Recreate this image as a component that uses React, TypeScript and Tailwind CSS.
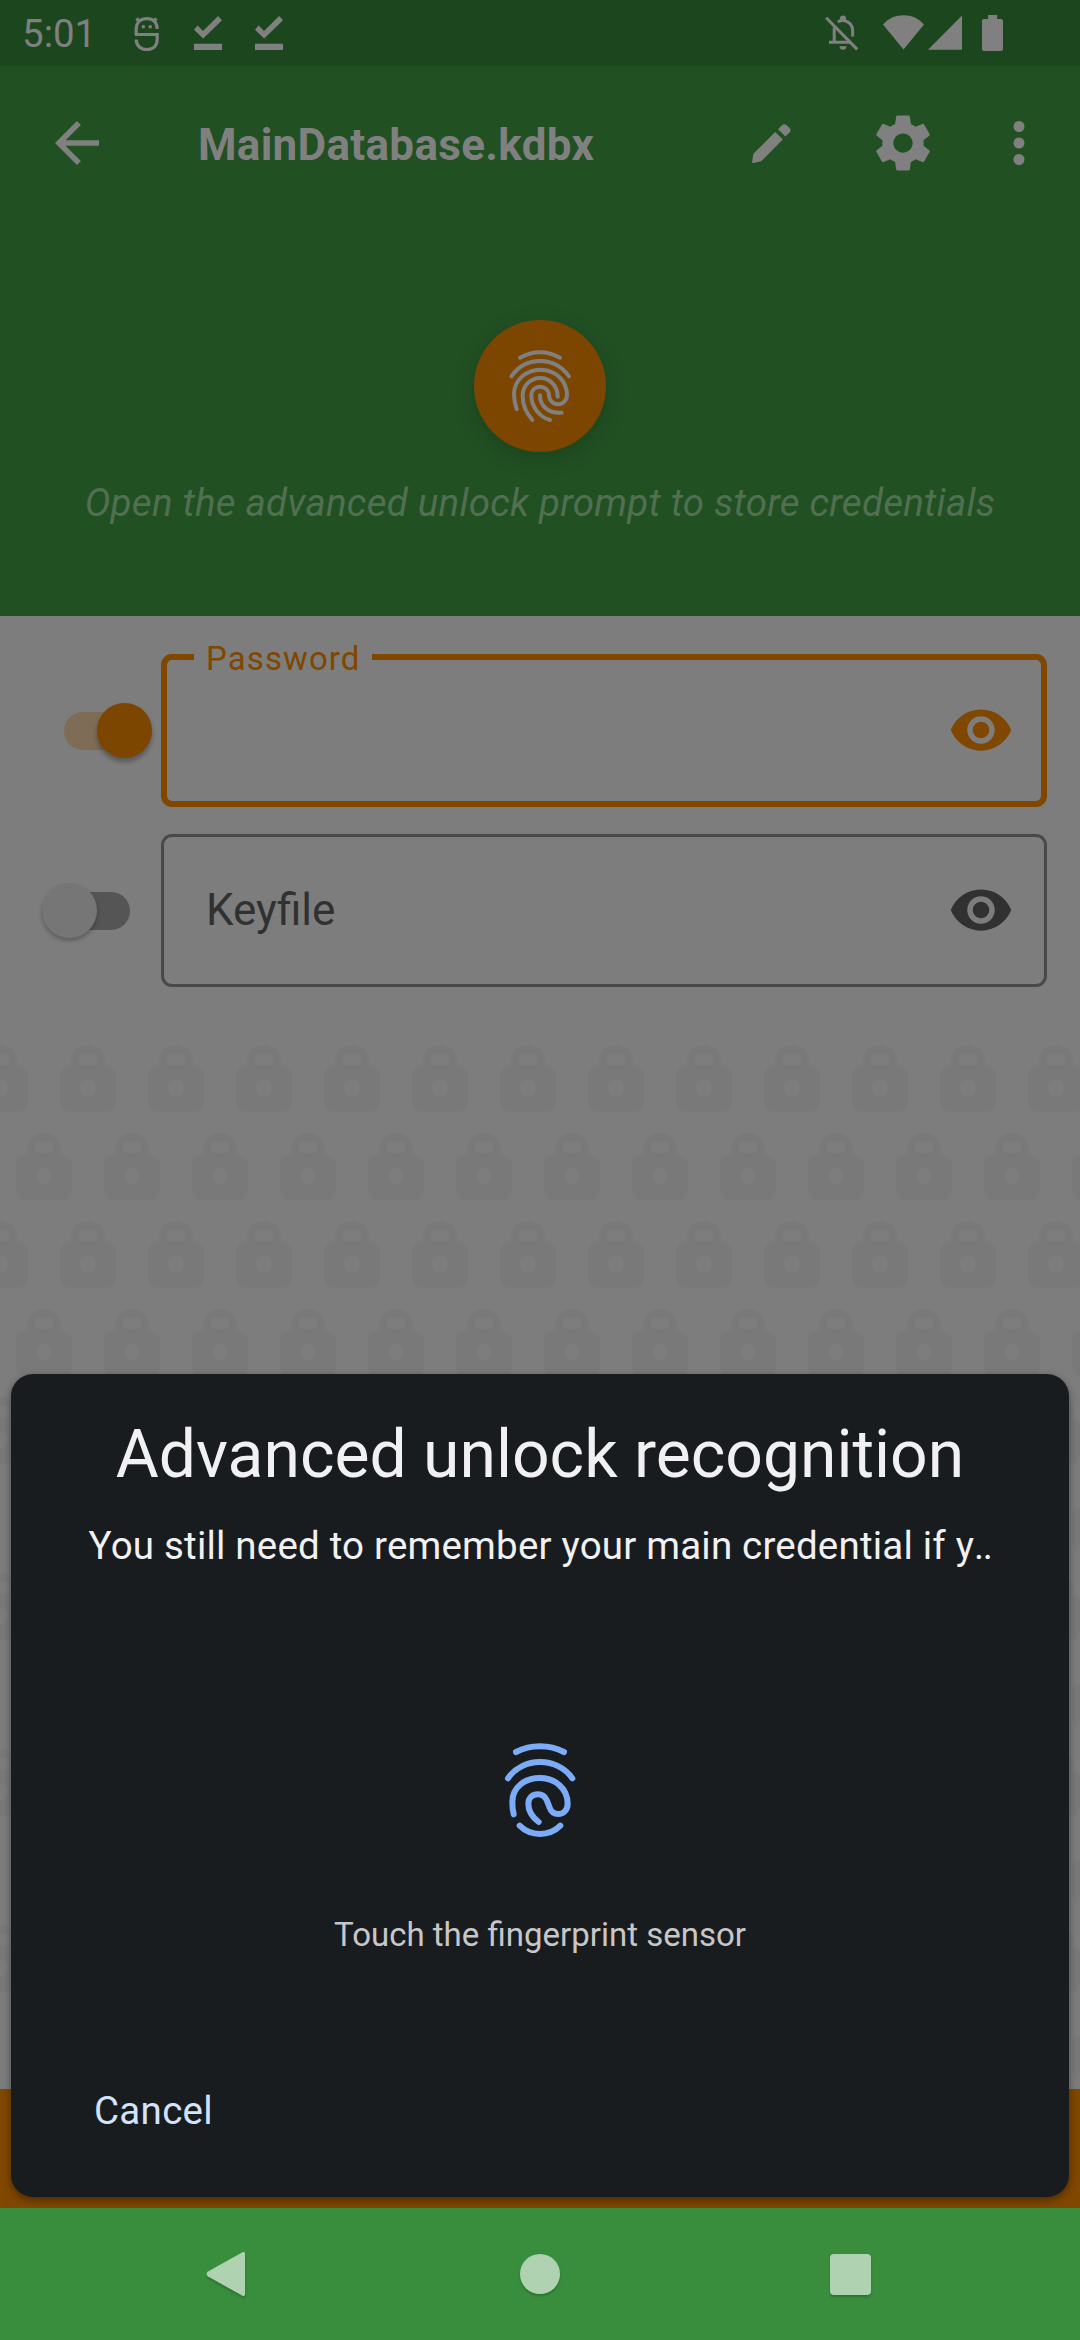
import React from "react";
import { MdVisibility, MdArrowBack } from "react-icons/md";

const FONT = "font-['Roboto',sans-serif]";

function DebugIcon() {
  return (
    <svg className="h-9 w-[26px]" viewBox="0 0 26 36" fill="none" stroke="#808080" strokeWidth="3.2">
      <path d="M2.2 18.5V13C2.2 6.5 6.7 2.7 13 2.7S23.2 6.5 23.2 13" />
      <path d="M0.8 18.5H23.2V23C23.2 30 19 33.5 13 33.5S2.2 30 2.2 23.5" />
      <path d="M2.5 2.5 6 6M22.5 2.5 19 6" />
      <circle cx="9.3" cy="10.8" r="1.8" fill="#808080" stroke="none" />
      <circle cx="16.2" cy="10.8" r="1.8" fill="#808080" stroke="none" />
    </svg>
  );
}

function DoneIcon() {
  return (
    <svg className="h-[34px] w-7" viewBox="0 0 28 34" fill="#808080">
      <path d="M0 13.7 3.6 9.6 9 15 24.1 0 28 4.2 9.2 22.6ZM0 27.8H28V34H0Z" />
    </svg>
  );
}

function BellOffIcon() {
  return (
    <svg className="h-9 w-[34px]" viewBox="0 0 34 36" fill="none" stroke="#808080" strokeWidth="3">
      <path d="M1.2 2.8 32.2 34.4" />
      <path d="M9.2 12.5V26.8M4 27.2H26" />
      <path d="M12.8 6.8C19 3.8 27.6 7 27.6 15.5V21.5" />
      <path d="M15 5V3.6A3 3 0 0 1 21 3.6V5Z" fill="#808080" stroke="none" />
      <path d="M14.6 31.3H21.4A3.4 3.4 0 0 1 14.6 31.3Z" fill="#808080" stroke="none" />
    </svg>
  );
}

function StatusBar() {
  return (
    <div className="flex h-[66px] items-start bg-[#1c471e] text-[#808080]">
      <span className="ml-[22px] mt-[11px] w-[112px] text-[38.5px] leading-[46px]">5:01</span>
      <div className="mt-4"><DebugIcon /></div>
      <div className="ml-[34px] mt-4"><DoneIcon /></div>
      <div className="ml-[33px] mt-4"><DoneIcon /></div>
      <div className="ml-auto mt-[15px] flex items-start">
        <div className="mr-6"><BellOffIcon /></div>
        <svg className="mr-1 h-[35px] w-[41px]" viewBox="0 0 41 35" fill="#808080">
          <path d="M20.5 34.5 0 9.5C10-3 31-3 41 9.5Z" />
        </svg>
        <svg className="mr-5 h-[35px] w-[34px]" viewBox="0 0 34 35" fill="#808080">
          <path d="M34 .5V34.8H0Z" />
        </svg>
        <svg className="mr-[77px] h-9 w-[21px]" viewBox="0 0 21 36" fill="#808080">
          <path d="M6.2 0H15.2V4H19A2 2 0 0 1 21 6V34A2 2 0 0 1 19 36H2A2 2 0 0 1 0 34V6A2 2 0 0 1 2 4H6.2Z" />
        </svg>
      </div>
    </div>
  );
}

function AppBar() {
  return (
    <div className="flex h-[154px] items-center text-[#808080]">
      <MdArrowBack className="ml-11 size-[66px]" />
      <h1 className="ml-[88px] mt-1 text-[44px] font-bold leading-[52px] tracking-[0.3px]">MainDatabase.kdbx</h1>
      <div className="ml-auto flex items-center">
        <svg className="mr-[79px] size-[39px]" viewBox="0 0 39 39" fill="currentColor">
          <path d="M23.2 8 30.8 15.4 10 36.6C9.5 37.1 9 37.4 8.3 37.5L1.2 38.9C.4 39 0 38.7.1 38L1.3 30.6C1.4 30 1.7 29.5 2.1 29.1ZM26 5.2 30 1.2C31.4-.2 33.3-.2 34.7 1.2L37.5 4C38.9 5.4 38.9 7 37.6 8.4L33.4 12.6Z" />
        </svg>
        <svg className="mr-[50px] size-[66px]" viewBox="0 0 24 24" fill="currentColor">
          <path d="M19.43 12.98c.04-.32.07-.64.07-.98s-.03-.66-.07-.98l2.11-1.65c.19-.15.24-.42.12-.64l-2-3.46c-.12-.22-.39-.3-.61-.22l-2.49 1c-.52-.4-1.08-.73-1.69-.98l-.38-2.65C14.46 2.18 14.25 2 14 2h-4c-.25 0-.46.18-.49.42l-.38 2.65c-.61.25-1.17.59-1.69.98l-2.49-1c-.23-.09-.49 0-.61.22l-2 3.46c-.13.22-.07.49.12.64l2.11 1.65c-.04.32-.07.65-.07.98s.03.66.07.98l-2.11 1.65c-.19.15-.24.42-.12.64l2 3.46c.12.22.39.3.61.22l2.49-1c.52.4 1.08.73 1.69.98l.38 2.65c.03.24.24.42.49.42h4c.25 0 .46-.18.49-.42l.38-2.65c.61-.25 1.17-.59 1.69-.98l2.49 1c.23.09.49 0 .61-.22l2-3.46c.12-.22.07-.49-.12-.64l-2.11-1.65zM12 15.5c-1.93 0-3.5-1.57-3.5-3.5s1.57-3.5 3.5-3.5 3.5 1.57 3.5 3.5-1.57 3.5-3.5 3.5z" />
        </svg>
        <svg className="mr-7 size-[66px]" viewBox="0 0 24 24" fill="currentColor">
          <circle cx="12" cy="6" r="2" />
          <circle cx="12" cy="12" r="2" />
          <circle cx="12" cy="18" r="2" />
        </svg>
      </div>
    </div>
  );
}

function UnlockButton() {
  return (
    <div className="flex size-[132px] items-center justify-center rounded-full bg-[#7d4600] shadow-[0_6px_22px_rgba(0,0,0,0.16)]">
      <svg className="size-[132px]" viewBox="102 60 396 396" fill="none" stroke="#808080" strokeWidth="12" strokeLinecap="round" strokeLinejoin="round">
        <path d="M240 173C278 151 322 151 360 173" />
        <path d="M214 229C258 168 342 168 387 229" />
        <path d="M230 327C224 310 222 300 222 283C222 242 257 209 301 209C346 209 381 242 381 286C381 301 369 313 354 313C339 313 327 301 327 286C327 271 315 260 300 260C286 260 274 271 274 286C274 320 298 352 330 360" />
        <path d="M277 360C258 338 248 315 248 287C248 258 271 234 301 234C330 234 353 258 353 290" />
        <path d="M300 286C300 318 325 341 365 338" />
      </svg>
    </div>
  );
}

function Switch({ on }: { on: boolean }) {
  return on ? (
    <div className="relative ml-16 h-[38px] w-[88px] rounded-full bg-[#7e6c56]">
      <div className="absolute -top-[9px] left-[33px] size-[55px] rounded-full bg-[#7d4600] shadow-[0_4px_5px_rgba(0,0,0,0.3)]" />
    </div>
  ) : (
    <div className="relative ml-[42px] h-[38px] w-[88px] rounded-full bg-[#555555]">
      <div className="absolute -top-[9px] left-0 size-[55px] rounded-full bg-[#767676] shadow-[0_3px_4px_rgba(0,0,0,0.25)]" />
    </div>
  );
}

function Credentials() {
  return (
    <div className="flex h-[428px] flex-col gap-[27px] pt-[38px]">
      <div className="flex h-[153px] items-center">
        <div className="w-[161px]"><Switch on /></div>
        <div className="relative flex h-[153px] w-[886px] items-center justify-end rounded-[11px] border-[6px] border-[#7f4700] pr-[27px]">
          <span className="absolute -top-[20px] left-[27px] h-[38px] w-[178px] bg-[#7d7d7d] pl-[12px] text-[33px] leading-[38px] tracking-[1.1px] text-[#7f4700]">Password</span>
          <MdVisibility className="mb-px size-[66px] text-[#7f4700]" />
        </div>
      </div>
      <div className="flex h-[153px] items-center">
        <div className="w-[161px]"><Switch on={false} /></div>
        <div className="flex h-[153px] w-[886px] items-center justify-between rounded-[11px] border-[3px] border-[#494949] pl-[42px] pr-[30px] text-[#313131]">
          <span className="mb-px text-[44px] leading-[52px]">Keyfile</span>
          <MdVisibility className="mb-px size-[66px]" />
        </div>
      </div>
    </div>
  );
}

const LOCK =
  "M-28 31A9 9 0 0 1 -19 22H-17V17A17 17 0 0 1 17 17V22H19A9 9 0 0 1 28 31V58A9 9 0 0 1 19 67H-19A9 9 0 0 1 -28 58ZM-8.5 20H8.5V12Q8.5 9 5.5 9H-5.5Q-8.5 9 -8.5 12ZM0 35A8 8 0 0 0 0 51A8 8 0 0 0 0 35Z";

function LockPattern() {
  return (
    <svg className="h-[1045px] w-[1080px]" fill="#797979" fillRule="evenodd">
      <defs>
        <pattern id="locks" y="0.7" width="88" height="176" patternUnits="userSpaceOnUse">
          <path d={LOCK} />
          <path d={LOCK} transform="translate(88 0)" />
          <path d={LOCK} transform="translate(44 88)" />
        </pattern>
      </defs>
      <rect width="1080" height="1045" fill="url(#locks)" />
    </svg>
  );
}

function BiometricDialog() {
  return (
    <div className={`absolute left-[11px] top-[1374px] flex h-[823px] w-[1058px] flex-col items-center rounded-[22px] bg-[#191c1e] shadow-[0_3px_8px_rgba(0,0,0,0.4)] ${FONT}`}>
      <h2 className="mt-[42px] text-[66px] leading-[78px] text-[#f1f1f3]">Advanced unlock recognition</h2>
      <p className="mt-[29px] text-[38.5px] leading-[46px] tracking-[0.2px] text-[#f1f1f3]">
        You still need to remember your main credential if y<span className="tracking-[-1.5px]">..</span>
      </p>
      <svg className="mt-[131px] size-[160px]" viewBox="0 0 480 480" fill="none" stroke="#7cacf8" strokeWidth="18" strokeLinecap="round">
        <path d="M168 156C212 133 268 133 312 156" />
        <path d="M144 235C188 170 292 170 337 235" />
        <path d="M161 343C157 328 157 320 157 305C157 262 194 234 240 234C288 234 323 268 323 311C323 330 310 342 295 342C282 342 273 334 269 323L260 300C254 288 246 283 234 283C218 283 205 293 205 312C205 335 218 352 236 366" />
        <path d="M179 377C212 410 268 410 301 377" />
      </svg>
      <p className="mt-[55px] text-[33px] leading-10 text-[#c7c7c9]">Touch the fingerprint sensor</p>
      <button className="ml-[83px] mt-[133px] self-start text-[38.5px] leading-[46px] tracking-[0.3px] text-[#d3e3fd]">Cancel</button>
    </div>
  );
}

function NavBar() {
  return (
    <div className="flex h-[132px] items-center bg-[#388e3c]">
      <svg className="h-[132px] w-[1080px] drop-shadow-[0_2px_1px_rgba(0,0,0,0.2)]" viewBox="0 0 1080 132" fill="#afd2b1">
        <path d="M242 44.5Q245 43 245 46V86Q245 89 242 87.5L208 68.5Q205 66 208 63.5Z" />
        <circle cx="540" cy="66" r="20" />
        <rect x="830" y="46" width="41" height="41" rx="4" />
      </svg>
    </div>
  );
}

export default function App() {
  return (
    <div className={`relative flex h-[2340px] w-[1080px] flex-col overflow-hidden bg-[#7d7d7d] ${FONT}`}>
      <StatusBar />
      <div className="flex h-[550px] flex-col bg-[#215023]">
        <AppBar />
        <div className="flex flex-col items-center pt-[100px]">
          <UnlockButton />
          <p className="mt-[28px] text-[38.5px] italic leading-[46px] tracking-[0.25px] text-[#516f51]">
            Open the advanced unlock prompt to store credentials
          </p>
        </div>
      </div>
      <Credentials />
      <LockPattern />
      <div className="h-[119px] bg-[#7f4700]" />
      <NavBar />
      <BiometricDialog />
    </div>
  );
}
